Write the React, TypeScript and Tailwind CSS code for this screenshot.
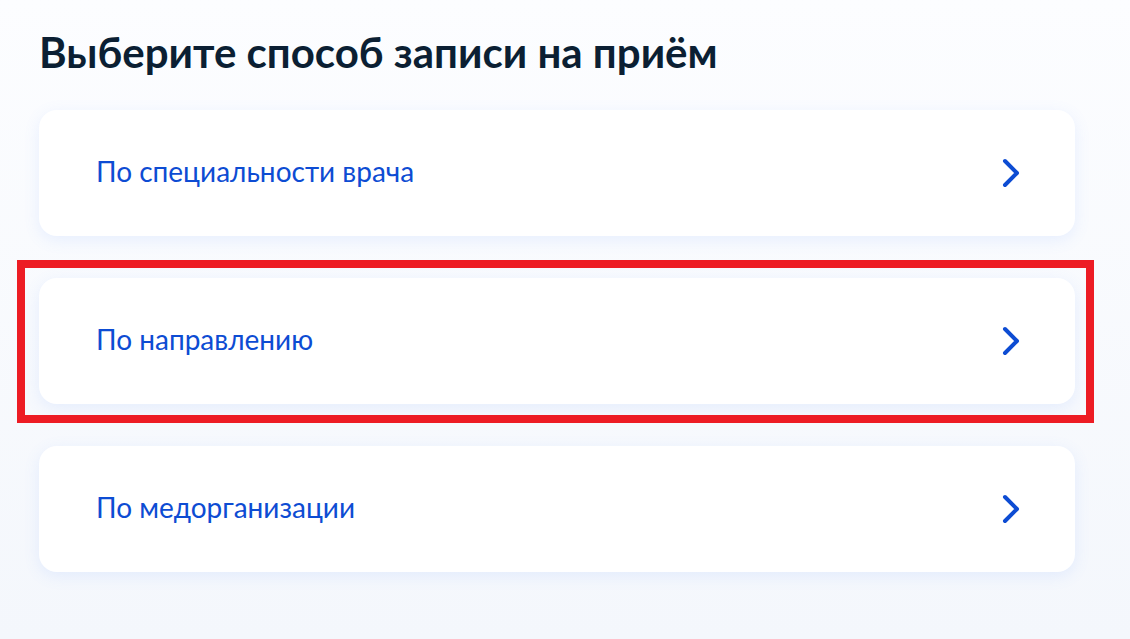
const options = ["По специальности врача", "По направлению", "По медорганизации"];

function Chevron() {
  return (
    <svg width="24" height="32" viewBox="0 0 24 32" fill="none" className="text-[#0d4cd3]">
      <path d="M8 4l12 12L8 28" stroke="currentColor" strokeWidth="4" strokeLinecap="round" strokeLinejoin="round" />
    </svg>
  );
}

function OptionCard({ label, marked }: { label: string; marked?: boolean }) {
  return (
    <div className="relative">
      <div className="flex h-[126px] items-center justify-between rounded-[18px] bg-white pl-[57px] pr-[54px] shadow-[0_4px_16px_rgba(102,150,255,0.12)]">
        <span className="pb-[4px] text-[28px] leading-none text-[#0d4cd3]">{label}</span>
        <Chevron />
      </div>
      {marked && (
        <div className="pointer-events-none absolute bottom-[-19px] left-[-22px] right-[-19px] top-[-18px] border-8 border-[#ed1c24]" />
      )}
    </div>
  );
}

export default function App() {
  return (
    <div
      className="min-h-screen w-[1130px] bg-gradient-to-b from-[#fcfdff] to-[#f4f7fc] pl-[39px] pr-[55px] pt-[24px]"
      style={{ fontFamily: "Lato, 'Noto Sans', sans-serif" }}
    >
      <h1 className="mb-[30px] text-[42px] font-bold leading-[56px] text-[#0b1f33]">
        Выберите способ записи на приём
      </h1>
      <div className="flex flex-col gap-[42px]">
        {options.map((o, i) => (
          <OptionCard key={o} label={o} marked={i === 1} />
        ))}
      </div>
    </div>
  );
}
